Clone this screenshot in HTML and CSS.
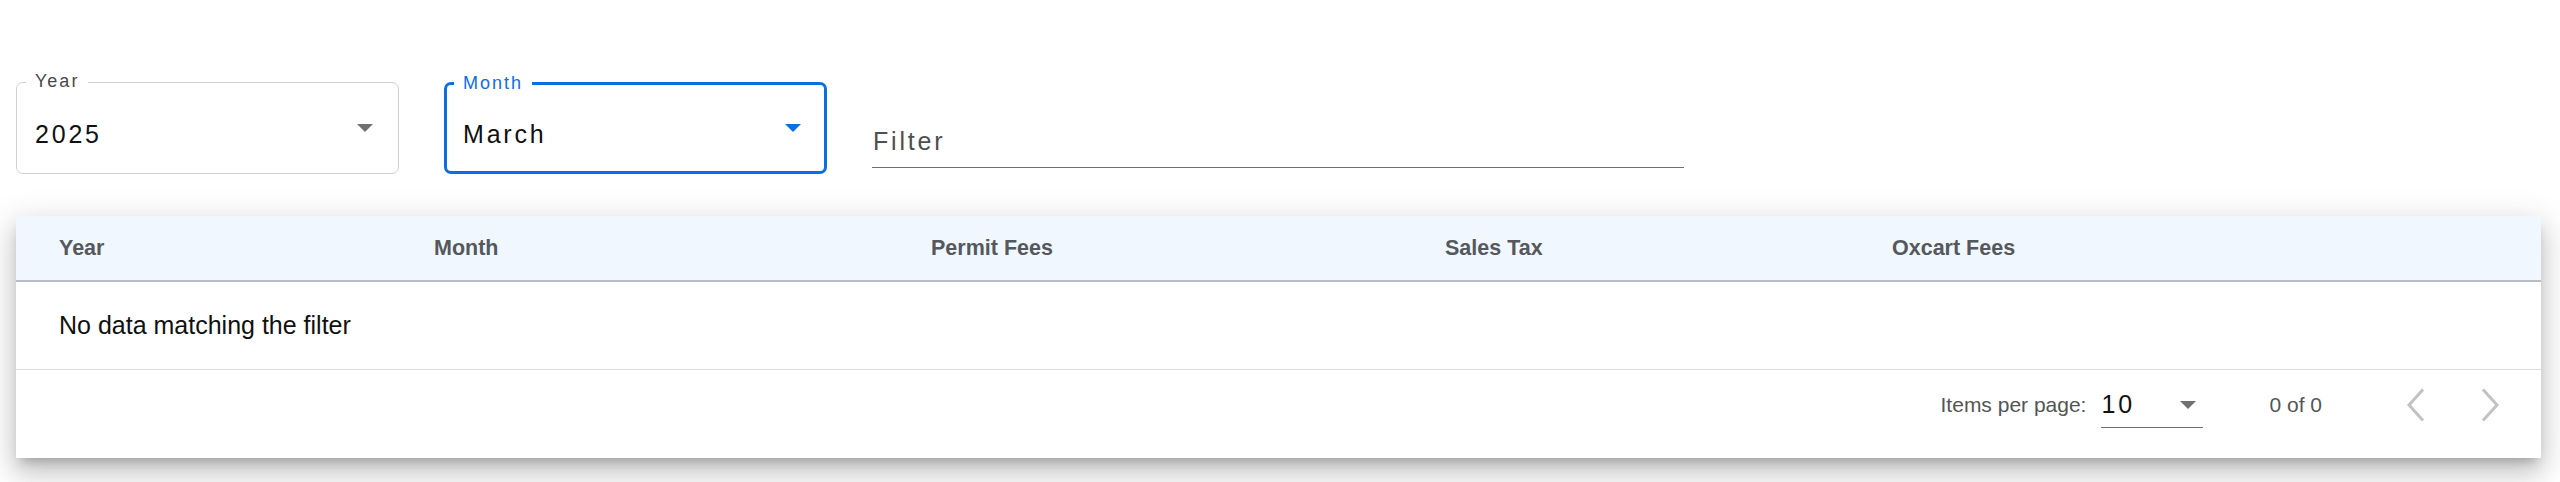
FILE: index.html
```html
<!DOCTYPE html>
<html lang="en">
<head>
<meta charset="utf-8">
<title>Fees report</title>
<link rel="stylesheet" href="styles.css">
</head>
<body>
<div class="page">
  <div class="filters">
    <div class="select-field">
      <span class="float-label">Year</span>
      <span class="value">2025</span>
      <span class="arrow"></span>
    </div>
    <div class="select-field focused">
      <span class="float-label">Month</span>
      <span class="value">March</span>
      <span class="arrow"></span>
    </div>
    <div class="filter-field">
      <span class="placeholder">Filter</span>
    </div>
  </div>

  <div class="card">
    <div class="row header">
      <div class="cell">Year</div>
      <div class="cell">Month</div>
      <div class="cell">Permit Fees</div>
      <div class="cell">Sales Tax</div>
      <div class="cell">Oxcart Fees</div>
    </div>
    <div class="row empty">
      <div class="cell">No data matching the filter</div>
    </div>
    <div class="paginator">
      <span class="per-page-label">Items per page:</span>
      <div class="page-size">
        <span class="page-size-value">10</span>
        <span class="arrow"></span>
      </div>
      <span class="range">0 of 0</span>
      <button class="nav-btn prev" aria-label="Previous page">
        <svg width="20" height="34" viewBox="0 0 20 34"><polyline points="17,1.5 3,17 17,32.5" fill="none" stroke="currentColor" stroke-width="3"/></svg>
      </button>
      <button class="nav-btn next" aria-label="Next page">
        <svg width="20" height="34" viewBox="0 0 20 34"><polyline points="3,1.5 17,17 3,32.5" fill="none" stroke="currentColor" stroke-width="3"/></svg>
      </button>
    </div>
  </div>
</div>
</body>
</html>
```

FILE: styles.css
```css
* { box-sizing: border-box; }

html, body {
  margin: 0;
  padding: 0;
  min-height: 482px;
  background: #ffffff;
  font-family: "Liberation Sans", Arial, sans-serif;
  color: #111;
}

.page {
  min-height: 482px;
  padding: 82px 0 24px 16px;
}

.filters {
  display: flex;
  align-items: flex-start;
  gap: 45px;
}

.select-field {
  position: relative;
  width: 383px;
  height: 92px;
  border: 1.5px solid #d0d0d0;
  border-radius: 7px;
  display: flex;
  align-items: center;
  padding: 12px 25px 0 18px;
}

.select-field.focused {
  border: 3px solid #0b6fe3;
  padding-left: 16px;
  padding-right: 23px;
}

.float-label {
  position: absolute;
  top: -11px;
  left: 9px;
  padding: 0 9px;
  background: #fff;
  font-size: 18px;
  line-height: 18px;
  letter-spacing: 2px;
  color: #4a4a4a;
}

.select-field.focused .float-label {
  left: 7px;
  color: #0b6fe3;
}

.value {
  flex: 1;
  font-size: 25px;
  line-height: 30px;
  letter-spacing: 2.8px;
  color: #111;
}

.arrow {
  width: 0;
  height: 0;
  border-left: 8.5px solid transparent;
  border-right: 8.5px solid transparent;
  border-top: 8.5px solid #707070;
}

.select-field .arrow {
  margin-bottom: 12px;
}

.select-field.focused .arrow {
  border-top-color: #0b6fe3;
}

.filter-field {
  width: 812px;
  padding: 44px 0 11px 1px;
  border-bottom: 1.5px solid #707070;
}

.placeholder {
  display: block;
  font-size: 25px;
  line-height: 30px;
  letter-spacing: 2.8px;
  color: #4f4f4f;
}

.card {
  margin-top: 42px;
  width: 2525px;
  background: #fff;
  box-shadow: 0 8px 10px -5px rgba(0,0,0,0.22), 0 16px 24px 2px rgba(0,0,0,0.14), 0 6px 30px 5px rgba(0,0,0,0.10);
}

.row {
  display: grid;
  grid-template-columns: 375px 497px 514px 447px 1fr;
  align-items: center;
  padding-left: 43px;
}

.header {
  height: 66px;
  background: #f0f7fe;
  border-bottom: 2px solid #b9bcc0;
}

.header .cell {
  font-size: 21.5px;
  font-weight: bold;
  color: #55585c;
}

.empty {
  height: 88px;
  border-bottom: 1.5px solid #dcdcdc;
}

.empty .cell {
  grid-column: 1 / -1;
  font-size: 25px;
  color: #111;
}

.paginator {
  height: 88px;
  display: flex;
  align-items: center;
  justify-content: flex-end;
  padding: 0 28px 18px 0;
}

.per-page-label {
  font-size: 21px;
  color: #555;
  margin-right: 15px;
}

.page-size {
  width: 102px;
  height: 46px;
  display: flex;
  align-items: center;
  border-bottom: 1.5px solid #707070;
  padding-right: 7px;
}

.page-size-value {
  flex: 1;
  font-size: 25px;
  letter-spacing: 2.8px;
  color: #111;
}

.range {
  margin-left: 66px;
  font-size: 21px;
  color: #555;
}

.nav-btn {
  width: 46px;
  height: 46px;
  border: none;
  background: none;
  padding: 0;
  color: #c2c2c2;
  display: flex;
  align-items: center;
  justify-content: center;
}

.nav-btn.prev {
  margin-left: 71px;
}

.nav-btn.next {
  margin-left: 28px;
}
```
